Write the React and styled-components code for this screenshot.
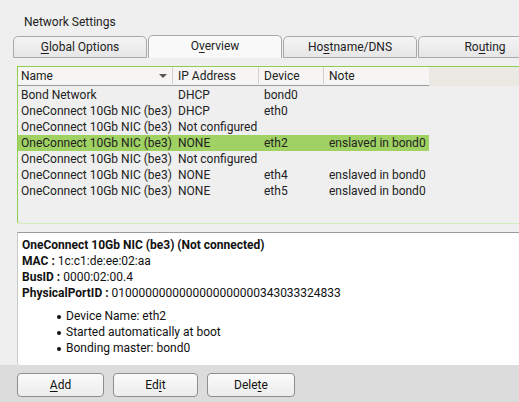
import React from 'react';
import styled, { createGlobalStyle } from 'styled-components';

const GlobalStyle = createGlobalStyle`
  html, body {
    margin: 0;
    padding: 0;
    width: 519px;
    height: 402px;
    overflow: hidden;
    background: #efefef;
  }
  body {
    font-family: Roboto, "Liberation Sans", sans-serif;
    font-size: 12px;
    color: #1f1f1f;
  }
`;

const Window = styled.div`
  width: 519px;
  height: 402px;
  display: flex;
  flex-direction: column;
  overflow: hidden;
`;

const Title = styled.div`
  height: 35px;
  padding-left: 24px;
  line-height: 44px;
  font-size: 12px;
  color: #222;
`;

const TabBar = styled.div`
  display: flex;
  align-items: flex-end;
  padding-left: 13px;
  height: 23px;
  white-space: nowrap;
`;

const Tab = styled.div`
  flex: 0 0 auto;
  width: ${p => p.$w}px;
  height: ${p => (p.$active ? 23 : 22)}px;
  box-sizing: border-box;
  margin-right: 1px;
  border: 1px solid #a9a9a9;
  border-bottom: ${p => (p.$active ? 'none' : '1px solid #a9a9a9')};
  border-radius: 5px 5px 0 0;
  background: ${p =>
    p.$active ? '#f9f9f9' : 'linear-gradient(#f4f4f4, #e6e6e6)'};
  text-align: center;
  line-height: 21px;
  font-size: 12px;
  color: #222;
`;

const Key = styled.span`
  text-decoration: underline;
  text-underline-offset: 2px;
`;

const TableArea = styled.div`
  margin: 8px 0 0 17px;
  height: 156px;
  border-top: 1px solid #8fcf4f;
  border-left: 1px solid #8fcf4f;
  border-bottom: 1px solid #d5ecbd;
  border-bottom-left-radius: 3px;
  background: #efefef;
`;

const Cols = `155px 86px 65px 105px 1fr`;

const HeaderRow = styled.div`
  display: grid;
  grid-template-columns: ${Cols};
  height: 19px;
  background: linear-gradient(90deg, #f7f5f3 0, #f7f5f3 411px, #ebe9e4 411px);
`;

const HeaderCell = styled.div`
  position: relative;
  padding-left: ${p => p.$pad || 5}px;
  line-height: 19px;
  font-size: 12px;
  color: #222;
  border-right: ${p => (p.$last ? 'none' : '1px solid #d4d2cf')};
  border-bottom: ${p => (p.$filler ? 'none' : '1px solid #9c9c9c')};
  box-sizing: border-box;
  height: 19px;
`;

const SortArrow = styled.span`
  position: absolute;
  right: 5px;
  top: 7px;
  width: 0;
  height: 0;
  border-left: 4px solid transparent;
  border-right: 4px solid transparent;
  border-top: 4px solid #555;
`;

const Row = styled.div`
  display: grid;
  grid-template-columns: 155px 86px 65px 105px;
  width: 411px;
  height: 16px;
  line-height: 16px;
  background: ${p => (p.$selected ? '#9fd163' : 'transparent')};
  margin-top: ${p => (p.$first ? 1 : 0)}px;
`;

const Cell = styled.div`
  padding-left: ${p => p.$pad || 5}px;
  white-space: nowrap;
  font-size: 12px;
  color: #222;
`;

const Details = styled.div`
  margin: 8px 0 0 17px;
  height: 133px;
  box-sizing: border-box;
  background: #ffffff;
  border-top: 1px solid #9a9a9a;
  border-left: 1px solid #c8c8c8;
  border-bottom-left-radius: 3px;
  padding: 4px 0 0 4px;
  font-size: 12px;
  line-height: 16px;
  color: #111;
`;

const Line = styled.div`
  white-space: nowrap;
`;

const Bullets = styled.ul`
  margin: 7px 0 0 0;
  padding-left: 44px;
  list-style: none;
`;

const Bullet = styled.li`
  position: relative;
  line-height: 16px;
  &:before {
    content: '';
    position: absolute;
    left: -9px;
    top: 7px;
    width: 4px;
    height: 4px;
    border-radius: 50%;
    background: #111;
  }
`;

const ButtonBar = styled.div`
  flex: 1;
  display: flex;
  gap: 9px;
  padding: 8px 0 0 17px;
  background: #dcdcdc;
`;

const Button = styled.div`
  width: ${p => p.$w}px;
  height: 24px;
  box-sizing: border-box;
  border: 1px solid #8e8e8e;
  border-radius: 4px;
  background: linear-gradient(#fafafa, #ececec);
  text-align: center;
  line-height: 22px;
  font-size: 12px;
  color: #111;
`;

const rows = [
  ['Bond Network', 'DHCP', 'bond0', ''],
  ['OneConnect 10Gb NIC (be3)', 'DHCP', 'eth0', ''],
  ['OneConnect 10Gb NIC (be3)', 'Not configured', '', ''],
  ['OneConnect 10Gb NIC (be3)', 'NONE', 'eth2', 'enslaved in bond0', true],
  ['OneConnect 10Gb NIC (be3)', 'Not configured', '', ''],
  ['OneConnect 10Gb NIC (be3)', 'NONE', 'eth4', 'enslaved in bond0'],
  ['OneConnect 10Gb NIC (be3)', 'NONE', 'eth5', 'enslaved in bond0'],
];

const App = () => (
  <Window>
    <GlobalStyle />
    <Title>Network Settings</Title>
    <TabBar>
      <Tab $w={134}><Key>G</Key>lobal Options</Tab>
      <Tab $w={134} $active>O<Key>v</Key>erview</Tab>
      <Tab $w={134}>Ho<Key>s</Key>tname/DNS</Tab>
      <Tab $w={134}>Ro<Key>u</Key>ting</Tab>
    </TabBar>
    <TableArea>
      <HeaderRow>
        <HeaderCell $pad={3}>Name<SortArrow /></HeaderCell>
        <HeaderCell>IP Address</HeaderCell>
        <HeaderCell>Device</HeaderCell>
        <HeaderCell $last>Note</HeaderCell>
        <HeaderCell $last $filler />
      </HeaderRow>
      {rows.map((r, i) => (
        <Row key={i} $selected={r[4]} $first={i === 0}>
          <Cell $pad={3}>{r[0]}</Cell>
          <Cell>{r[1]}</Cell>
          <Cell>{r[2]}</Cell>
          <Cell>{r[3]}</Cell>
        </Row>
      ))}
    </TableArea>
    <Details>
      <Line><b>OneConnect 10Gb NIC (be3) (Not connected)</b></Line>
      <Line><b>MAC :</b> 1c:c1:de:ee:02:aa</Line>
      <Line><b>BusID :</b> 0000:02:00.4</Line>
      <Line><b>PhysicalPortID :</b> 0100000000000000000000343033324833</Line>
      <Bullets>
        <Bullet>Device Name: eth2</Bullet>
        <Bullet>Started automatically at boot</Bullet>
        <Bullet>Bonding master: bond0</Bullet>
      </Bullets>
    </Details>
    <ButtonBar>
      <Button $w={87}><Key>A</Key>dd</Button>
      <Button $w={85}>Ed<Key>i</Key>t</Button>
      <Button $w={88}>Dele<Key>t</Key>e</Button>
    </ButtonBar>
  </Window>
);

export default App;
